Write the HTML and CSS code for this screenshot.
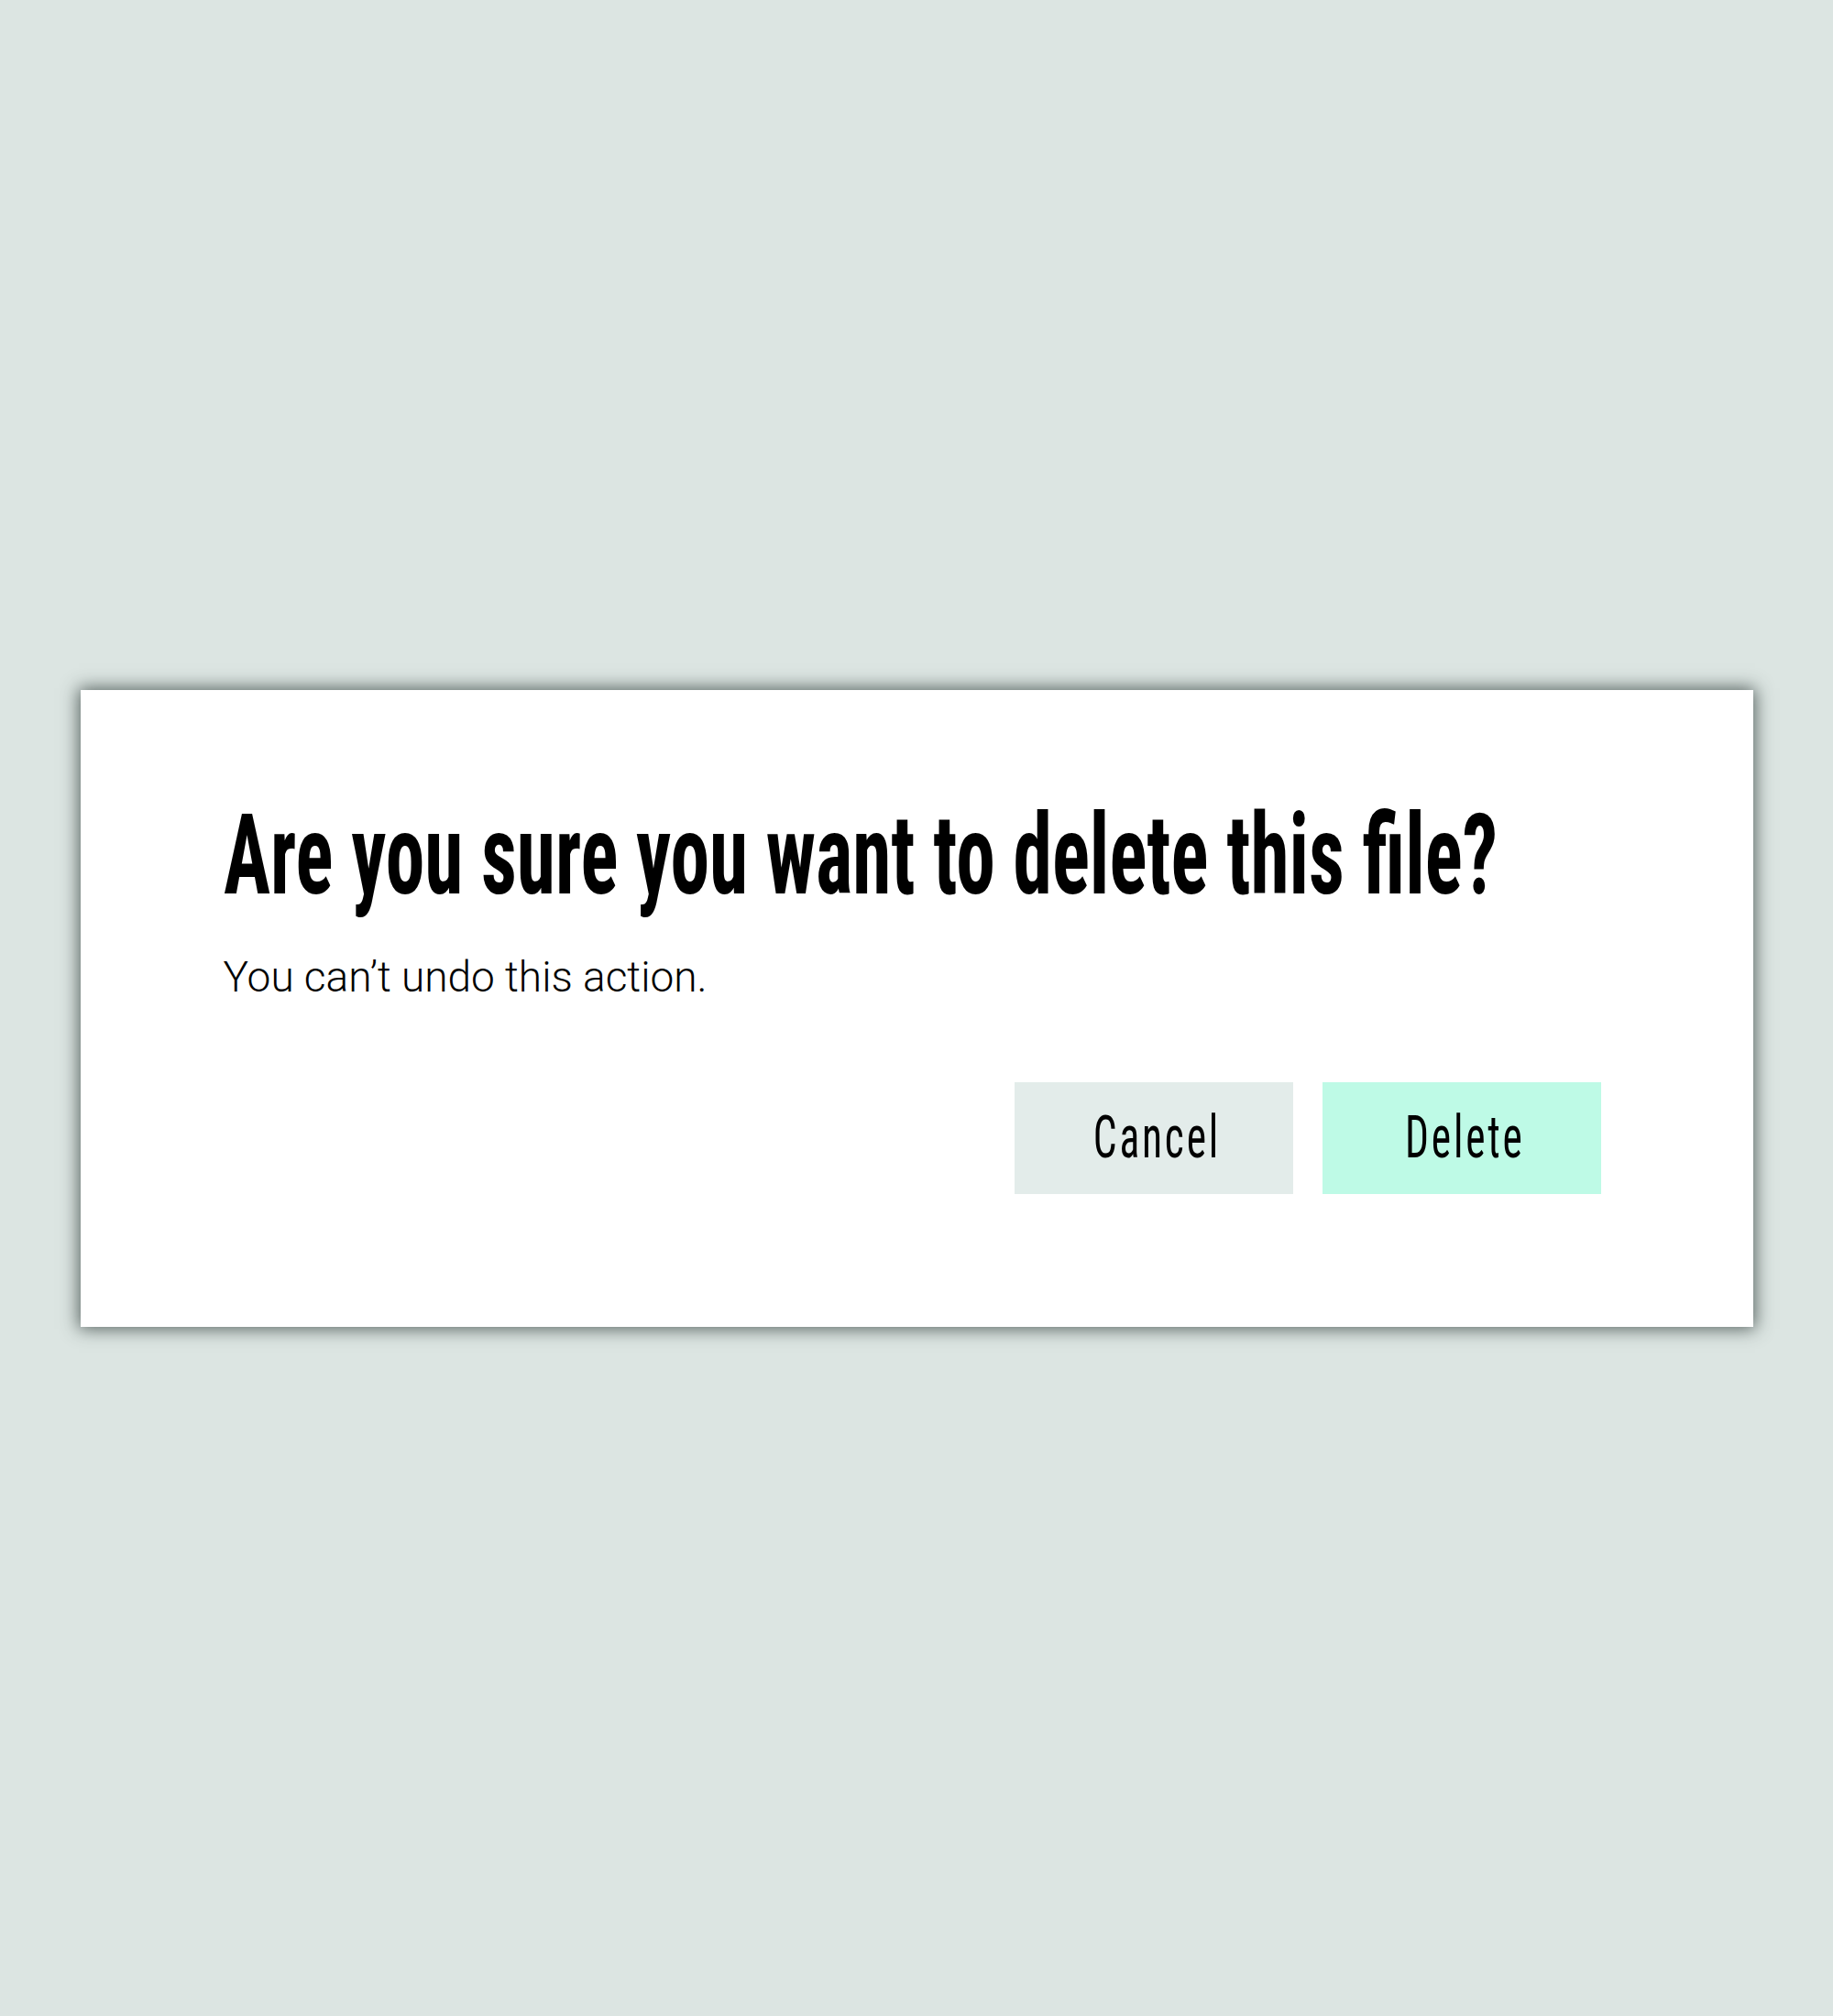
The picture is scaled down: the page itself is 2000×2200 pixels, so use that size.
FILE: index.html
```html
<!DOCTYPE html>
<html lang="en">
<head>
<meta charset="utf-8">
<title>Delete file</title>
<link rel="stylesheet" href="styles.css">
</head>
<body>
<main class="overlay">
  <section class="dialog" role="dialog" aria-labelledby="dlg-title">
    <h1 class="dialog-title" id="dlg-title"><span class="squeeze">Are you sure you want to delete this file?</span></h1>
    <p class="dialog-text">You can’t undo this action.</p>
    <div class="dialog-actions">
      <button class="btn btn-cancel" type="button"><span class="btn-label">Cancel</span></button>
      <button class="btn btn-delete" type="button"><span class="btn-label">Delete</span></button>
    </div>
  </section>
</main>
</body>
</html>
```

FILE: styles.css
```css
html, body {
  margin: 0;
  padding: 0;
}
body {
  background: #dce5e2;
  font-family: "Roboto", "Liberation Sans", sans-serif;
  color: #000;
}
.overlay {
  min-height: 100vh;
  display: flex;
  align-items: center;
  justify-content: center;
}
.dialog {
  width: 1825px;
  box-sizing: border-box;
  background: #fff;
  padding: 120px 166px 145px 156px;
  box-shadow: 0 0 18px 2px rgba(50, 62, 60, 0.8);
}
.dialog-title {
  margin: 0;
  font-family: "Roboto", sans-serif;
  font-stretch: 75%;
  font-weight: 700;
  font-size: 122px;
  line-height: 122px;
  white-space: nowrap;
}
.squeeze {
  display: block;
  width: max-content;
  transform: scaleX(0.701);
  transform-origin: left center;
}
.dialog-text {
  margin: 44px 0 0;
  font-family: "Roboto", sans-serif;
  font-weight: 300;
  font-size: 46px;
  line-height: 55px;
}
.dialog-actions {
  display: flex;
  justify-content: flex-end;
  gap: 32px;
  margin-top: 87px;
}
.btn {
  width: 304px;
  height: 122px;
  border: 0;
  border-radius: 0;
  padding: 0 0 0 8px;
  display: flex;
  align-items: center;
  justify-content: center;
  font-family: "Roboto", sans-serif;
  font-stretch: 75%;
  font-weight: 400;
  font-size: 65px;
  line-height: 1;
  letter-spacing: 4px;
  color: #000;
  cursor: pointer;
}
.btn-label {
  display: inline-block;
  transform: scaleX(0.7);
  transform-origin: center center;
}
.btn-cancel { background: #e3ecea; }
.btn-delete { background: #befae6; }
```
